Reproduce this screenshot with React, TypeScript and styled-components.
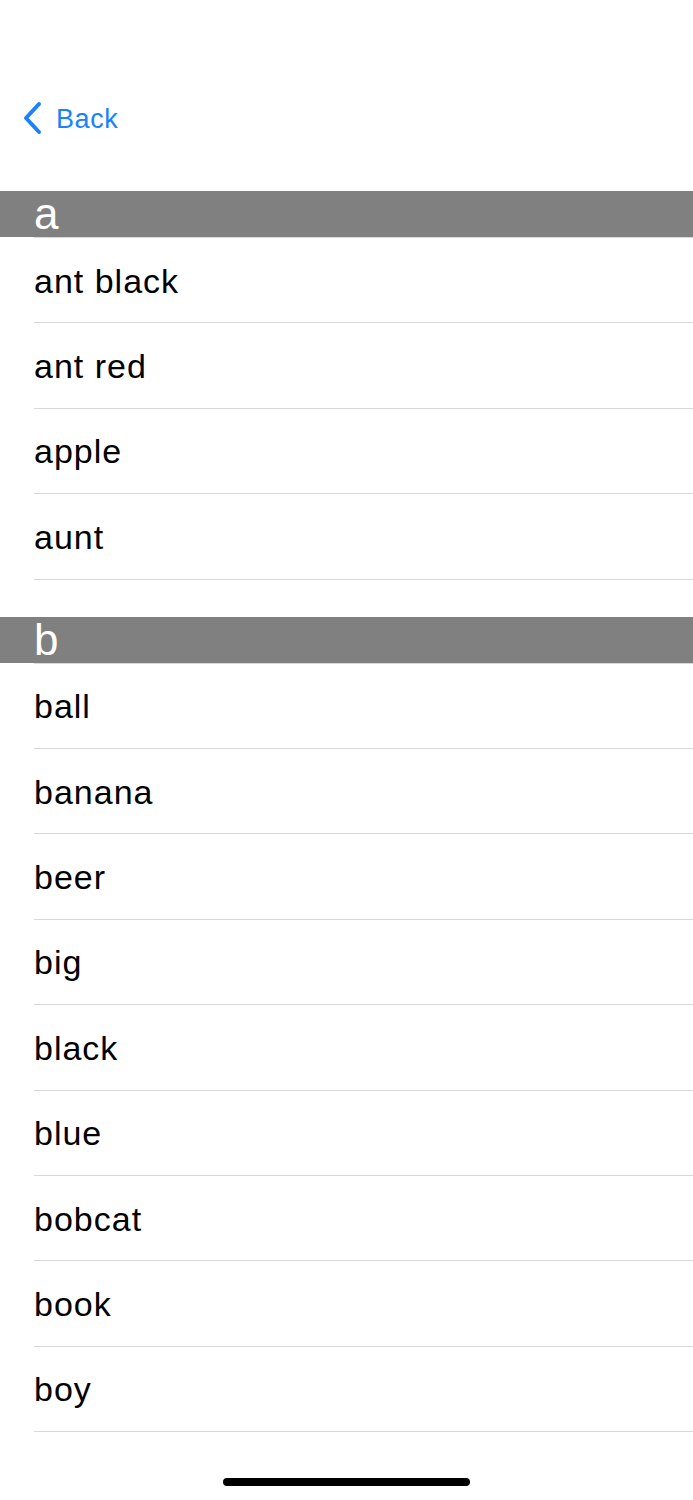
import styled, { createGlobalStyle } from 'styled-components'

const GlobalStyle = createGlobalStyle`
  html, body {
    margin: 0;
    padding: 0;
    background: #ffffff;
    font-family: "Liberation Sans", Arial, sans-serif;
  }
`

const sections = [
  { title: 'a', items: ['ant black', 'ant red', 'apple', 'aunt'] },
  { title: 'b', items: ['ball', 'banana', 'beer', 'big', 'black', 'blue', 'bobcat', 'book', 'boy'] },
]

export default function App() {
  return (
    <Screen>
      <GlobalStyle />
      <NavBar>
        <BackButton>
          <svg width="22" height="34" viewBox="0 0 22 34" fill="none">
            <path d="M18 3 L5 17 L18 31" stroke="#1a82fb" strokeWidth="4" strokeLinecap="round" strokeLinejoin="round" />
          </svg>
          <BackLabel>Back</BackLabel>
        </BackButton>
      </NavBar>

      <List>
        {sections.map((section) => (
          <Section key={section.title}>
            <SectionHeader>{section.title}</SectionHeader>
            <Rows>
              {section.items.map((item) => (
                <Row key={item}>{item}</Row>
              ))}
            </Rows>
          </Section>
        ))}
      </List>

      <HomeIndicator />
    </Screen>
  )
}

const Screen = styled.div`
  position: relative;
  width: 693px;
  height: 1500px;
  overflow: hidden;
  background: #ffffff;
`

const NavBar = styled.div`
  height: 191px;
  display: flex;
  align-items: flex-start;
  padding: 100px 0 0 21px;
  box-sizing: border-box;
`

const BackButton = styled.div`
  display: flex;
  align-items: center;
  gap: 13px;
  cursor: pointer;
`

const BackLabel = styled.span`
  color: #1a82fb;
  font-size: 27px;
  line-height: 34px;
  letter-spacing: 0.6px;
  padding-top: 2px;
`

const List = styled.div`
  display: flex;
  flex-direction: column;
  gap: 37px;
`

const Section = styled.div`
  display: flex;
  flex-direction: column;
`

const SectionHeader = styled.div`
  height: 46px;
  background: #808080;
  color: #ffffff;
  font-size: 44px;
  line-height: 46px;
  padding-left: 34px;
`

const Rows = styled.div`
  margin-left: 34px;
  border-top: 1px solid #d9d9d9;
`

const Row = styled.div`
  height: 85.4px;
  box-sizing: border-box;
  border-bottom: 1px solid #d9d9d9;
  display: flex;
  align-items: center;
  padding-top: 2px;
  font-size: 34px;
  letter-spacing: 1px;
  color: #000000;
`

const HomeIndicator = styled.div`
  position: absolute;
  left: 223px;
  bottom: 14px;
  width: 247px;
  height: 8px;
  border-radius: 4px;
  background: #000000;
`
